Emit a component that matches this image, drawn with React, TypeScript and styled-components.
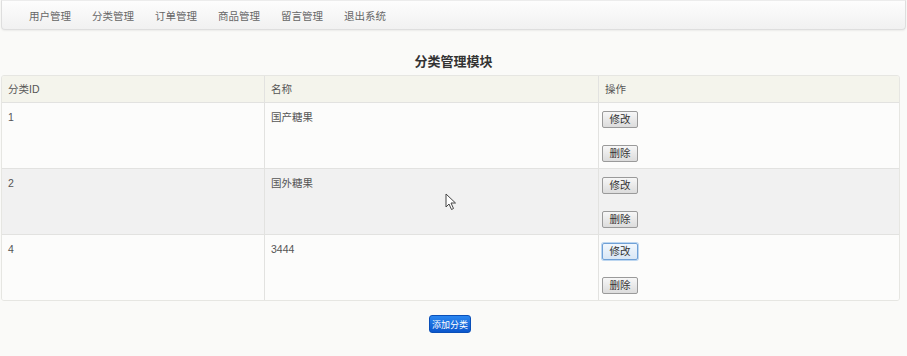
import React from 'react'
import styled, { createGlobalStyle } from 'styled-components'

const GlobalStyle = createGlobalStyle`
  html, body {
    margin: 0;
    padding: 0;
    background: #fafaf8;
    font-family: "Liberation Sans", "Noto Sans CJK SC", sans-serif;
    color: #555;
  }
`

const Page = styled.div`
  position: relative;
  width: 907px;
  height: 356px;
  overflow: hidden;
`

const NavBar = styled.ul`
  display: flex;
  align-items: center;
  gap: 22px;
  list-style: none;
  margin: 0 1px;
  height: 30px;
  padding: 0 0 0 27px;
  box-sizing: border-box;
  border: 1px solid #dedede;
  border-top-color: #ececec;
  border-radius: 0 0 4px 4px;
  background: linear-gradient(#fdfdfd, #f1f1f1);
  box-shadow: 0 1px 2px rgba(0, 0, 0, 0.06);
`

const NavItem = styled.li`
  font-size: 10.5px;
  color: #666;
  width: 41px;
  white-space: nowrap;
`

const Title = styled.h3`
  margin: 20px 0 0;
  height: 24px;
  line-height: 24px;
  text-align: center;
  font-size: 13px;
  font-weight: bold;
  color: #333;
`

const Table = styled.div`
  display: grid;
  grid-template-columns: 262px 334px 1fr;
  width: 897px;
  margin: 1px 0 0 1px;
  border: 1px solid #e6e6e2;
  border-radius: 3px;
  overflow: hidden;
`

const Cell = styled.div<{ $bg: string; $head?: boolean }>`
  background: ${(p) => p.$bg};
  border-left: 1px solid #e2e2e0;
  border-top: ${(p) => (p.$head ? 'none' : '1px solid #e2e2e0')};
  padding: ${(p) => (p.$head ? '6px 6px 5px' : '7px 6px 6px')};
  min-height: ${(p) => (p.$head ? '15px' : '52px')};
  font-size: 10.5px;
  line-height: 15px;
  color: #555;

  &:nth-child(3n + 1) {
    border-left: none;
  }
`

const Actions = styled.div`
  display: flex;
  flex-direction: column;
  align-items: flex-start;
  gap: 17px;
  padding-top: 1px;
`

const SmallButton = styled.button<{ $focus?: boolean }>`
  height: 17px;
  width: 36px;
  padding: 0;
  margin-left: -3px;
  font-family: "Liberation Sans", "Noto Sans CJK SC", sans-serif;
  font-size: 10.5px;
  line-height: 15px;
  color: #333;
  border-radius: 2px;
  border: 1px solid ${(p) => (p.$focus ? '#6fa0d6' : '#9a9a9a')};
  background: ${(p) =>
    p.$focus ? 'linear-gradient(#f1f7fd, #d9e7f5)' : 'linear-gradient(#f7f7f7, #dcdcdc)'};
  box-shadow: ${(p) => (p.$focus ? '0 0 0 1px #bcd6f0' : 'none')};
  cursor: pointer;
`

const Footer = styled.div`
  display: flex;
  justify-content: center;
  padding-top: 14px;
`

const AddButton = styled.button`
  height: 18px;
  width: 42px;
  padding: 0;
  font-family: "Liberation Sans", "Noto Sans CJK SC", sans-serif;
  font-size: 9px;
  color: #fff;
  border: 1px solid #0a4fb8;
  border-radius: 3px;
  background: linear-gradient(#2a86f0, #0b56cc);
  margin-left: -7px;
`

const Cursor = styled.svg`
  position: absolute;
  left: 445px;
  top: 193px;
`

const rows = [
  { id: '1', name: '国产糖果', bg: '#fcfcfb' },
  { id: '2', name: '国外糖果', bg: '#f1f1f1' },
  { id: '4', name: '3444', bg: '#fcfcfb', focus: true },
]

const navItems = ['用户管理', '分类管理', '订单管理', '商品管理', '留言管理', '退出系统']

export default function App() {
  return (
    <Page>
      <GlobalStyle />
      <NavBar>
        {navItems.map((n) => (
          <NavItem key={n}>{n}</NavItem>
        ))}
      </NavBar>
      <Title>分类管理模块</Title>
      <Table>
        <Cell $bg="#f4f4ec" $head>分类ID</Cell>
        <Cell $bg="#f4f4ec" $head>名称</Cell>
        <Cell $bg="#f4f4ec" $head>操作</Cell>
        {rows.map((r) => (
          <React.Fragment key={r.id}>
            <Cell $bg={r.bg}>{r.id}</Cell>
            <Cell $bg={r.bg}>{r.name}</Cell>
            <Cell $bg={r.bg}>
              <Actions>
                <SmallButton $focus={r.focus}>修改</SmallButton>
                <SmallButton>删除</SmallButton>
              </Actions>
            </Cell>
          </React.Fragment>
        ))}
      </Table>
      <Footer>
        <AddButton>添加分类</AddButton>
      </Footer>
      <Cursor width="12" height="18" viewBox="0 0 12 18">
        <path
          d="M1 1 L1 14 L4 11 L6.5 16.5 L8.5 15.5 L6 10 L10.5 10 Z"
          fill="#fff"
          stroke="#444"
          strokeWidth="1"
          strokeLinejoin="round"
        />
      </Cursor>
    </Page>
  )
}
